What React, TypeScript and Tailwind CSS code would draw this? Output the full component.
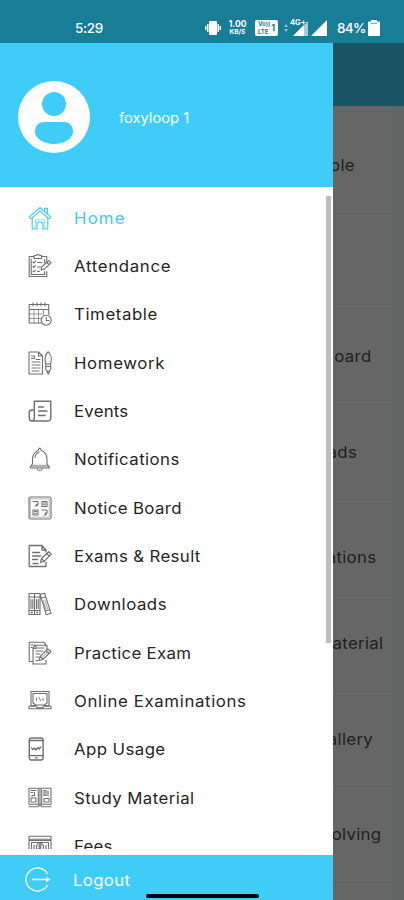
import type { ReactNode } from 'react';

type MenuItem = {
  label: string;
  tracking: string;
  icon: ReactNode;
  active?: boolean;
};

function Glyph({ children, className }: { children: ReactNode; className: string }) {
  return (
    <svg
      viewBox="0 0 24 24"
      className={`size-6 shrink-0 ${className}`}
      fill="none"
      stroke="currentColor"
      strokeWidth="1.1"
      strokeLinecap="round"
      strokeLinejoin="round"
    >
      {children}
    </svg>
  );
}

const menu: MenuItem[] = [
  {
    label: 'Home',
    tracking: 'tracking-[1.1px]',
    active: true,
    icon: (
      <>
        <path d="M1.2 11.2 12 1.500l10.800 9.700-1.800 1.600-9-8-9 8z" />
        <path d="M4.200 12v11h5v-6.800h5.600V23h5V12M16.500 5.200V2.400h3v5.500" />
        <path d="M6 21.500h1.500V14h9v7.500H18" strokeWidth=".6" />
      </>
    ),
  },
  {
    label: 'Attendance',
    tracking: 'tracking-[0.64px]',
    icon: (
      <>
        <path d="M6 2.500H1.200v20h17.600v-5M13.500 2.500h5.300v6" />
        <path d="M6 1.500h2.300c.4-1.300 3-1.300 3.400 0h2v3H6zM3.200 5v15.500h13.500v-3M16.700 5v4" />
        <path d="m5 8 1 1 1.500-2M5 12.500l1 1 1.500-2M5 17l1 1 1.500-2M9.500 8.500h4M9.500 13h3M9.500 17.500h2" />
        <path d="m13 16 .7-3 7-6.300 2.300 2.200-7 6.500zM19 8.500l2 2" />
      </>
    ),
  },
  {
    label: 'Timetable',
    tracking: 'tracking-[0.56px]',
    icon: (
      <>
        <path d="M14 21H1.200V2.500h19.600v10M1.200 7.500h19.600M5 .8v3M9 .8v3M13 .8v3M17 .8v3" />
        <path d="M6 7.500V21M10.500 7.500V21M15.500 7.500v5M1.200 12h13M1.200 16.500h12" strokeWidth=".7" />
        <circle cx="18.200" cy="18.200" r="5" />
        <path d="M18.200 15.200v3.300H21" />
      </>
    ),
  },
  {
    label: 'Homework',
    tracking: 'tracking-[0.6px]',
    icon: (
      <>
        <path d="M1 1h9.500l4 4v18H1zM10.500 1v4h4M3.500 5h2.800v2.500H3.500M8 8.500h4M4 11h8M4 14h8M4 17h5M10.500 17H12M4 20h7" />
        <path d="M18 13c-2-5-.5-10 2.200-12.200C23 3 24 8 22.500 13zM18 15.500h4.500M17.800 13v5.500l1.200 1.500h2.500l1.200-1.500V13M19 20l1.200 3.200 1.300-3.200" />
      </>
    ),
  },
  {
    label: 'Events',
    tracking: 'tracking-[0.2px]',
    icon: (
      <>
        <path d="M6.300 2.200h16.500v16.200c0 2.500-1.300 3.600-3.300 3.600H4c-2 0-2.800-1.200-2.800-3v-5.500c0-1.800.8-2.500 2.500-2.500h2.600M6.300 2.200V19c0 1.800-.7 3-2.300 3" strokeWidth="1.4" />
        <path d="M10.500 8h5M10.500 12h8.500M10.500 16.500H17" strokeWidth="1.4" />
      </>
    ),
  },
  {
    label: 'Notifications',
    tracking: 'tracking-[0.4px]',
    icon: (
      <>
        <path d="M10.500 3.200c0-2.800 2.500-2.800 2.500 0 4 1.500 6 5 6 9v4.500l2.300 3.300v1H2.200v-1l2.300-3.300v-4.500c0-4 2-7.500 6-9z" />
        <path d="M9 21.500c.5 2.600 5 2.600 5.500 0M7 10.500c.3-2.500 1.500-4.300 4-5.500" />
        <path d="M4 18.300h16M3.500 19.700h17" strokeWidth=".7" />
      </>
    ),
  },
  {
    label: 'Notice Board',
    tracking: 'tracking-[0.35px]',
    icon: (
      <>
        <rect x="1" y="1" width="22" height="22" rx="1.5" />
        <rect x="2.800" y="2.800" width="18.400" height="18.400" strokeWidth=".5" />
        <path d="M5 5.500h5v3L8.500 10H7M10 8.500H8.500V10M14 5.500h5v5h-5zM15.500 7h2M15.500 8.800h2M5 14h5v5H5zM6.500 15.500h2M6.500 17.300h2M14 14h5v3l-1.500 2H16M19 17h-1.500v2" />
      </>
    ),
  },
  {
    label: 'Exams & Result',
    tracking: 'tracking-[0.35px]',
    icon: (
      <>
        <path d="M18 8V6l-4-4.500H1.200v21H18v-4M14 1.500V6h4M4.500 8.500h7M4.500 12h8M4.500 15.500h5M5 19.500h5" strokeWidth="1.3" />
        <path d="m12.500 18.500 1-4 7.200-6.800 2.600 2.500-7 7zM13.500 14.500l2.800 2.800M18.700 9.500l2.600 2.600" strokeWidth="1.2" />
      </>
    ),
  },
  {
    label: 'Downloads',
    tracking: 'tracking-[0.48px]',
    icon: (
      <>
        <path d="M1 1.500h5.500v21H1zM6.500 1.500H12v21H6.500zM12 2.500l4.500-1.300 6.500 20-4.700 1.500zM1 5h11M1 18.500h11M3 7.500v9M4.800 7.500v9M8.500 7.500v9M10.200 7.500v9M13 6.200l5-1.400M17 19.200l5-1.500" />
        <circle cx="3.700" cy="20.500" r=".5" />
        <circle cx="9.200" cy="20.500" r=".5" />
        <path d="m15 8.500 3 9M16.800 8l3 9" strokeWidth=".7" />
      </>
    ),
  },
  {
    label: 'Practice Exam',
    tracking: 'tracking-[0.3px]',
    icon: (
      <>
        <path d="M5 20.500H1.200V1.200H16l1.500 2V5M5 23V7l3-2.800h11V9M5 7.500h3V4.200M5 23h13v-4M3 4h4M3 6.500h1" />
        <path d="M9 7h7M8 10h7M8 13h4M8 16h3M8 19.500h2" />
        <path d="m11 19.500 1.200-4.200 7.600-7.500L23 10.500l-7.700 7.700zM12.200 15.300l3 3M18 9.700l3.200 3" />
        <path d="m14 16.500 6-6" strokeWidth=".8" />
      </>
    ),
  },
  {
    label: 'Online Examinations',
    tracking: 'tracking-[0.6px]',
    icon: (
      <>
        <path d="M3 16V2.500h18V16M5 14V4.500h14V14l-3 2H8zM1 17.200h7l1.500 1.600h5l1.500-1.600h7v2.500H1zM3 16.500h5M16 16.500h5" />
        <path d="M8.500 9v2.500M11 8.500l1.500 3M15 9v2.500" strokeWidth=".9" />
      </>
    ),
  },
  {
    label: 'App Usage',
    tracking: 'tracking-[0.4px]',
    icon: (
      <>
        <rect x="1.300" y="1" width="13.800" height="22" rx="2" strokeWidth="1.4" />
        <path d="M1.300 3.500h13.800M1.300 18.700h13.800M7.300 20.800h2M3.500 11 5 12.500 6.500 11 8 13l2-2.500 1.300 1.500 1.500-2" strokeWidth="1.3" />
      </>
    ),
  },
  {
    label: 'Study Material',
    tracking: 'tracking-[0.4px]',
    icon: (
      <>
        <path d="M1 2.200h22v16H1zM12 2.200v16M10.300 3.500v14M13.700 3.500v14M1 20.800h9l1-1.200h2l1 1.200h9" />
        <path d="M3 4.500h5M3 6.500h2M6.500 6.500v3H4M3 12h5v4H3zM4 9.500v1M16 4.500h2v5h-2zM20 5v5M16 12.500h5v3.500h-5z" />
      </>
    ),
  },
  {
    label: 'Fees',
    tracking: 'tracking-[0.2px]',
    icon: (
      <>
        <path d="M1 2.300h22v17H1zM1 5.200h22M3.500 19V8.500h17V19M1 6.500h22" />
        <circle cx="12" cy="13" r="3.500" />
        <path d="M12 10v6M13.300 11.500h-2l-.4 1.500h2l-.4 1.500h-1.800M6 11v4M18 11v4" />
      </>
    ),
  },
];

// Tails of the dashboard tiles that stick out from behind the drawer
const tiles = [
  { text: 'ble', pad: 'pr-[37px]' },
  { text: '', pad: '' },
  { text: 'oard', pad: 'pr-[21px]' },
  { text: 'ads', pad: 'pr-[35px]' },
  { text: 'ations', pad: 'pr-[16px] pt-[19px]' },
  { text: 'aterial', pad: 'pr-[9px]' },
  { text: 'allery', pad: 'pr-[19px]' },
  { text: 'olving', pad: 'pr-[11px]' },
];

function StatusBar() {
  return (
    <div className="flex h-[42.5px] shrink-0 items-end bg-[#187d96] pb-[7px] font-medium leading-4 text-white">
      <span className="ml-[75px] w-[130px] shrink-0 text-[13.5px] tracking-[-0.3px]">5:29</span>
      <svg viewBox="0 0 16 16" className="size-4 shrink-0" fill="white">
        <rect x="4" y="1" width="8" height="14" rx="1" />
        <path d="M2 4h1.500v8H2zM0 6h1.500v4H0zM12.500 4H14v8h-1.500zM14.500 6H16v4h-1.500z" />
      </svg>
      <div className="ml-[7px] flex w-[19px] shrink-0 flex-col items-center text-[8.5px] font-bold leading-[9px]">
        <span>1.00</span>
        <span className="text-[6.5px] leading-[7px]">KB/S</span>
      </div>
      <div className="ml-[8px] flex h-4 w-[23px] shrink-0 items-center justify-center gap-px rounded-[2px] bg-white text-[#187d96]">
        <div className="flex flex-col text-[6px] font-bold leading-[7.5px]">
          <span>Vo))</span>
          <span>LTE</span>
        </div>
        <span className="text-[9px] font-bold">1</span>
      </div>
      <svg viewBox="0 0 8 16" className="ml-[4px] h-4 w-2 shrink-0" fill="#8fc2cf">
        <path d="m2 7 2-3 2 3zM2 9h4l-2 3z" />
      </svg>
      <div className="relative ml-px h-4 w-[17px] shrink-0">
        <svg viewBox="0 0 17 16" className="h-4 w-[17px]">
          <path d="M2 16 17 1v15z" fill="#a6cdd6" />
          <path d="M2 16 13 5v11z" fill="white" />
        </svg>
        <span className="absolute -left-[1px] -top-[1px] text-[7.5px] font-bold leading-[8px]">4G+</span>
      </div>
      <svg viewBox="0 0 16 16" className="ml-[3px] size-4 shrink-0" fill="white">
        <path d="M0 16 16 0v16z" />
      </svg>
      <span className="ml-[10px] w-[30px] shrink-0 text-[13.5px] tracking-[-0.7px]">84%</span>
      <svg viewBox="0 0 12 16" className="ml-px h-4 w-3 shrink-0">
        <path d="M3 0h6v1.500h2q1 0 1 1V15q0 1-1 1H1q-1 0-1-1V2.500q0-1 1-1h2z" fill="white" />
        <path d="M2.500 3.300h7" stroke="#187d96" strokeWidth=".7" />
      </svg>
    </div>
  );
}

function Dashboard() {
  return (
    <div className="flex flex-1 flex-col overflow-hidden bg-[#626665] text-[#202020]">
      <div className="h-[63.5px] shrink-0 bg-[#1a5363]" />
      <div className="mr-3 flex-1 overflow-hidden bg-[#666] pt-3">
        {tiles.map((tile, i) => (
          <div
            key={i}
            className={`flex h-[95.6px] items-center justify-end border-b border-[#606363] text-[16px] tracking-[0.3px] ${tile.pad}`}
          >
            <span className="origin-right scale-x-105">{tile.text}</span>
          </div>
        ))}
      </div>
    </div>
  );
}

function Drawer() {
  return (
    <aside className="absolute bottom-0 left-0 top-[42.5px] flex w-[333px] flex-col bg-white">
      <div className="flex h-[144px] shrink-0 items-center bg-[#3fcdf7] text-white">
        <svg viewBox="0 0 72 72" className="ml-[18px] mt-[5px] size-[72px]">
          <circle cx="36" cy="36" r="36" fill="white" />
          <circle cx="36" cy="23" r="12" fill="#3fcdf7" />
          <path d="M26 41h20c5.500 0 9 4 9 9.500 0 7.500-9 12.500-19 12.500s-19-5-19-12.500C17 45 20.500 41 26 41z" fill="#3fcdf7" />
        </svg>
        <span className="ml-[29px] mt-[6px] origin-left scale-x-105 whitespace-nowrap text-[14px]">foxyloop 1</span>
      </div>
      <div className="flex min-h-0 flex-1">
        <nav className="mb-[6px] flex-1 overflow-hidden pt-[7px]">
          {menu.map((item) => (
            <div
              key={item.label}
              className={`flex h-[48.35px] items-center gap-[21.5px] pl-[28px] ${item.active ? 'text-[#42c8ef]' : 'text-[#262626]'}`}
            >
              <Glyph className={item.active ? 'text-[#42c8ef]' : 'text-[#707070]'}>{item.icon}</Glyph>
              <span className={`origin-left scale-x-105 whitespace-nowrap text-[16px] ${item.tracking}`}>{item.label}</span>
            </div>
          ))}
        </nav>
        <div className="mr-[2px] mt-[9px] h-[447px] w-[5px] bg-[#bdbdbd]" />
      </div>
      <div className="flex h-[45px] shrink-0 items-center gap-[21.5px] bg-[#3fcdf7] pl-[25px] pt-[4px] text-white">
        <svg viewBox="0 0 26 26" className="size-[26px]" fill="none" stroke="white" strokeWidth="1.3">
          <path d="M22.500 7A11.500 11.500 0 1 0 22.500 18M7 12.500h15" />
          <path d="m21 9.700 4.500 2.800-4.500 2.800z" fill="white" stroke="none" />
        </svg>
        <span className="origin-left scale-x-105 text-[16px] tracking-[0.3px]">Logout</span>
      </div>
    </aside>
  );
}

export default function App() {
  return (
    <div className="relative flex h-[900px] w-[404px] select-none flex-col overflow-hidden font-['Inter',sans-serif]">
      <StatusBar />
      <Dashboard />
      <Drawer />
      <div className="absolute bottom-[2px] left-[146px] h-[4px] w-[113px] rounded-full bg-black" />
    </div>
  );
}
